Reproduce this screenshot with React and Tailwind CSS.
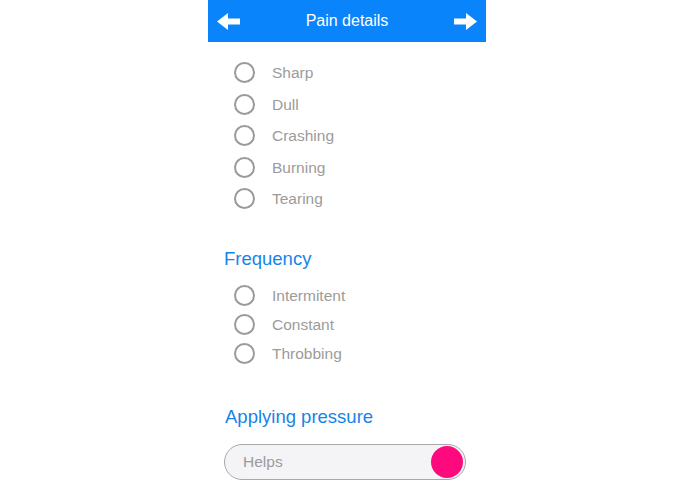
const types = ['Sharp', 'Dull', 'Crashing', 'Burning', 'Tearing']
const freqs = ['Intermitent', 'Constant', 'Throbbing']

function Arrow({ dir }) {
  return (
    <svg width="23" height="17" viewBox="0 0 23 17" className={dir === 'right' ? '' : '-scale-x-100'}>
      <path d="M0 5.5 H12 V0 L23 8.5 L12 17 V11.5 H0 Z" fill="white" />
    </svg>
  )
}

function Radio({ label, h }) {
  return (
    <div className={`flex items-center ${h}`}>
      <span className="ml-[26px] w-[21px] h-[21px] rounded-full border-[2.5px] border-[#9a9a9a]" />
      <span className="ml-[17px] text-[15.5px] text-[#9b9b9b]">{label}</span>
    </div>
  )
}

export default function App() {
  return (
    <div className="w-[695px] h-[494px] bg-white flex pl-[208px] overflow-hidden" style={{ fontFamily: '"Liberation Sans", Arial, sans-serif' }}>
      <div className="w-[278px]">
        <div className="h-[42px] bg-[#0a84fa] flex items-center justify-between px-[9px]">
          <Arrow dir="left" />
          <span className="text-white text-[16px]">Pain details</span>
          <Arrow dir="right" />
        </div>
        <div className="pt-[15px]">
          {types.map((t) => (
            <Radio key={t} label={t} h="h-[31.5px]" />
          ))}
        </div>
        <div className="mt-[32px] ml-[16px] h-[24px] leading-[24px] text-[18.5px] text-[#1584ea]">Frequency</div>
        <div className="mt-[10.5px]">
          {freqs.map((t) => (
            <Radio key={t} label={t} h="h-[29px]" />
          ))}
        </div>
        <div className="mt-[37px] ml-[17px] h-[24px] leading-[24px] text-[18.5px] text-[#1584ea]">Applying pressure</div>
        <div className="mt-[15px] ml-[16px] w-[242px] h-[36px] rounded-full border border-[#a8a8a8] bg-[#f4f3f6] flex items-center justify-between pl-[18px] pr-[2px]">
          <span className="text-[15.5px] text-[#9b9b9b]">Helps</span>
          <span className="w-[32px] h-[32px] rounded-full bg-[#ff0a7e]" />
        </div>
      </div>
    </div>
  )
}
